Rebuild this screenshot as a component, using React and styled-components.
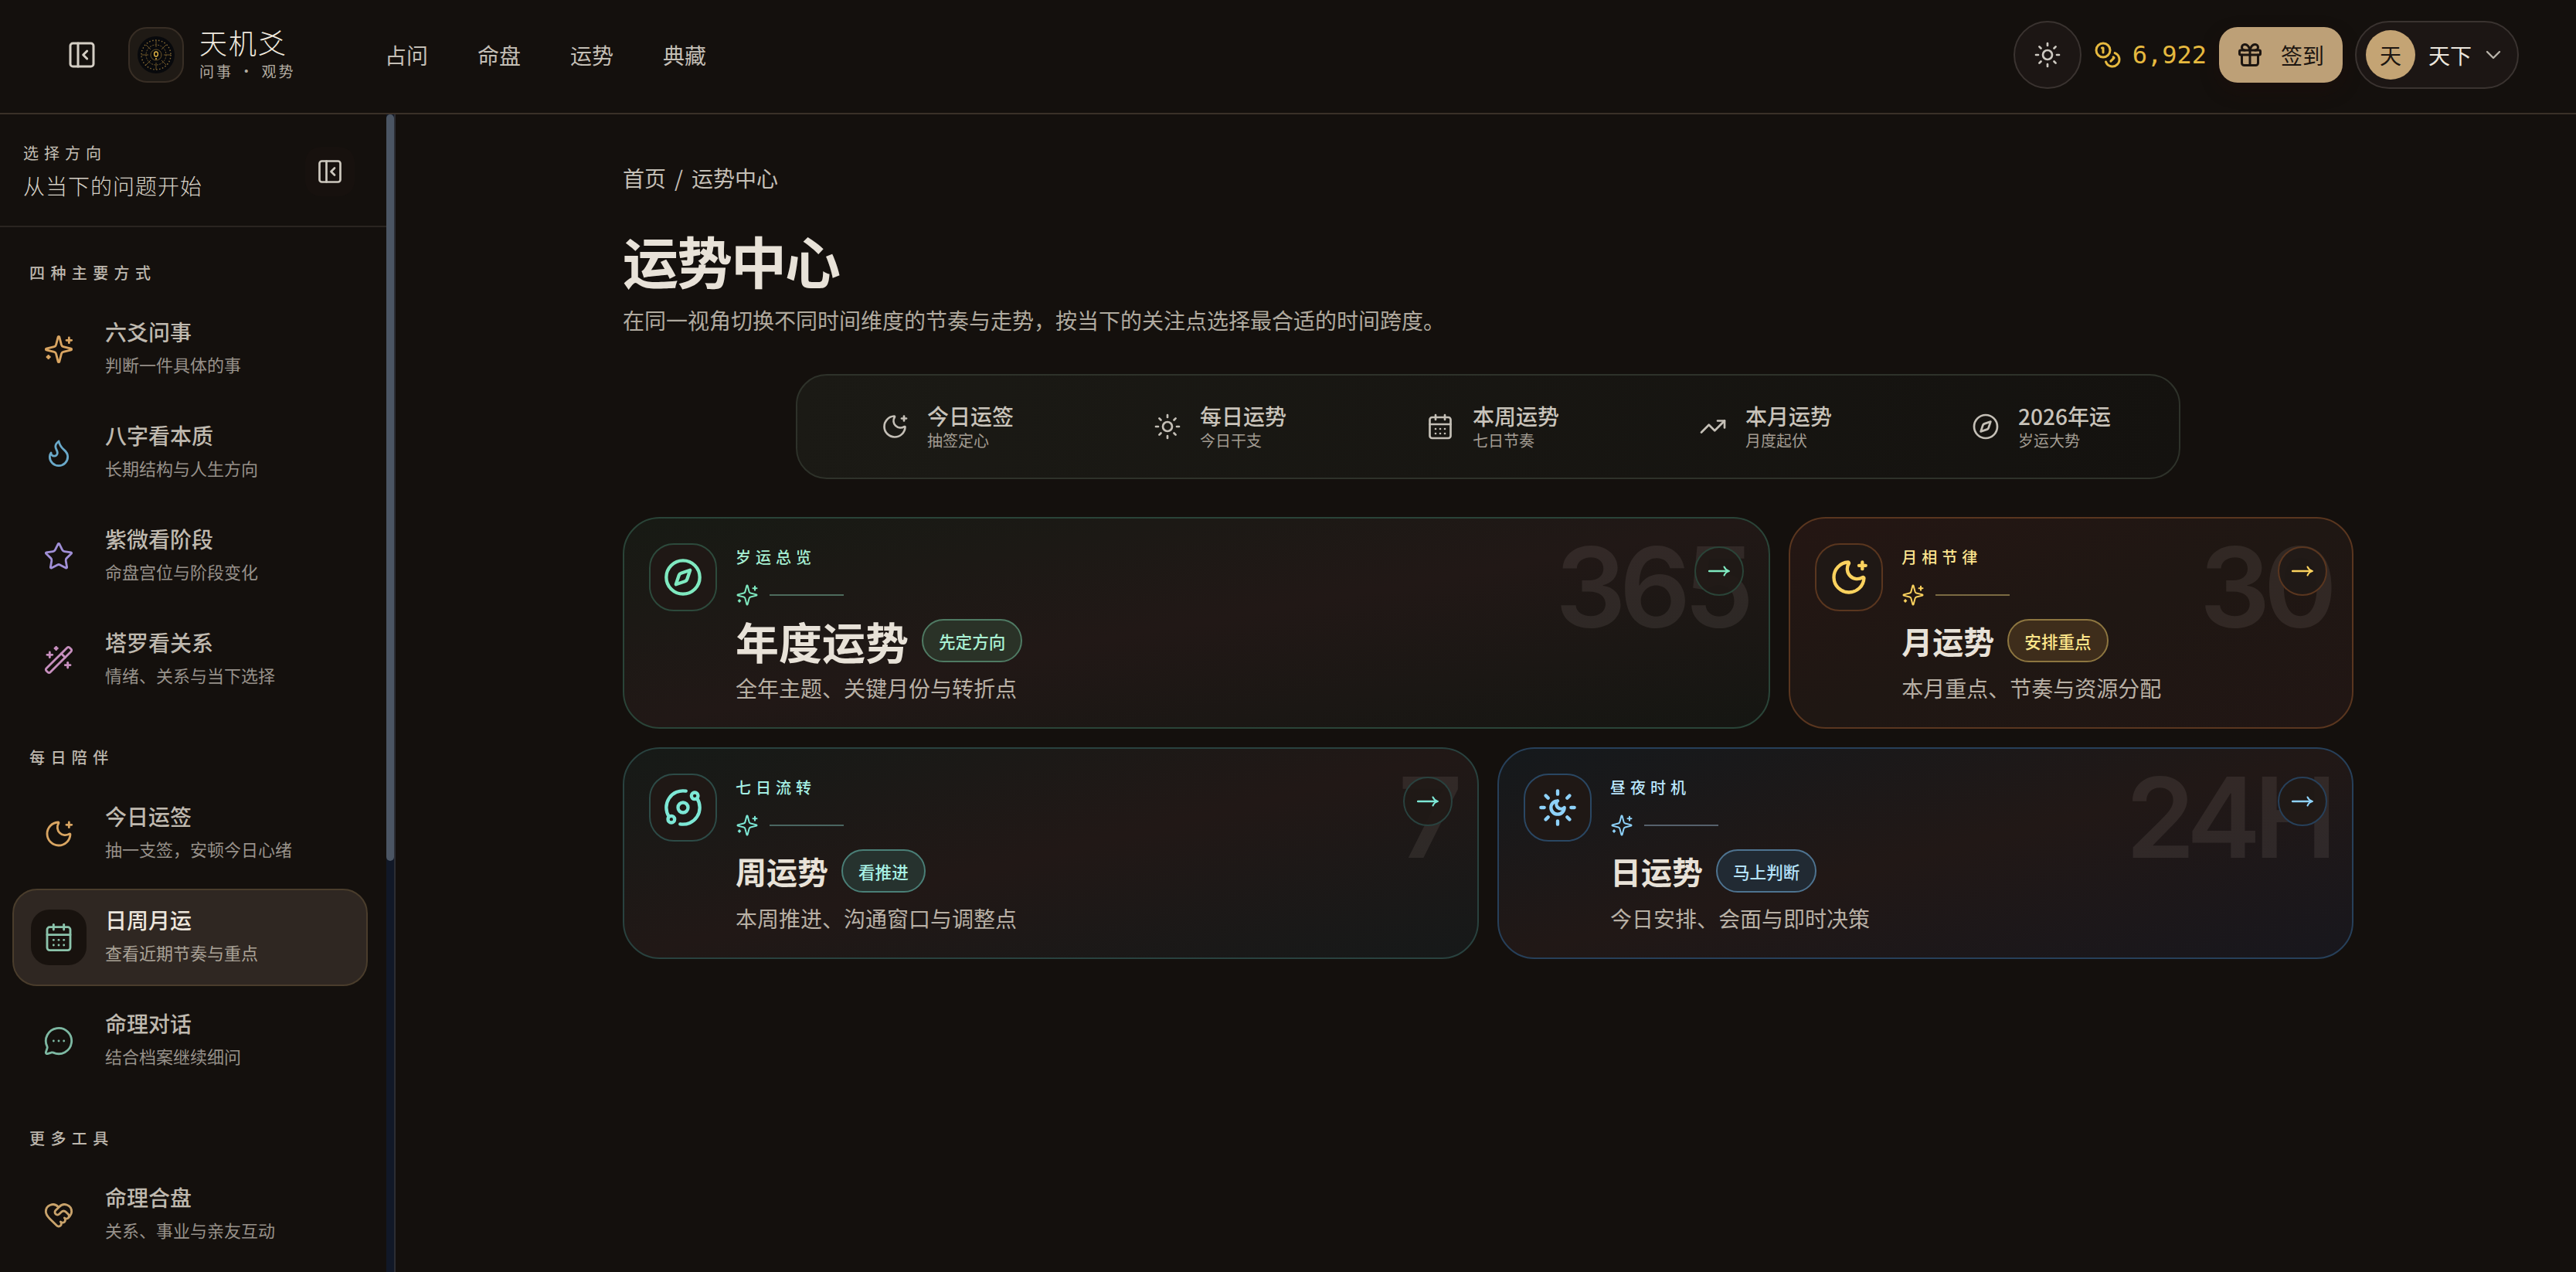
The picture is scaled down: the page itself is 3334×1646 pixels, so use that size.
import React from "react";
import styled, { createGlobalStyle } from "styled-components";
import {
  PanelLeftClose, Sun, Coins, Gift, ChevronDown, Flame, Star, WandSparkles,
  MoonStar, CalendarDays, MessageCircleMore, HeartHandshake, TrendingUp, Compass, Orbit,
} from "lucide-react";

// the narrow four point star from the older lucide set, the installed one is fatter
function SparkMark({ size, strokeWidth }) {
  return (
    <svg width={size} height={size} viewBox="0 0 24 24" fill="none" stroke="currentColor" strokeWidth={strokeWidth} strokeLinecap="round" strokeLinejoin="round">
      <path d="M9.937 15.5A2 2 0 0 0 8.5 14.063l-6.135-1.582a.5.5 0 0 1 0-.962L8.5 9.936A2 2 0 0 0 9.937 8.5l1.582-6.135a.5.5 0 0 1 .963 0L14.063 8.5A2 2 0 0 0 15.5 9.937l6.135 1.581a.5.5 0 0 1 0 .964L15.5 14.063a2 2 0 0 0-1.437 1.437l-1.582 6.135a.5.5 0 0 1-.963 0z" />
      <path d="M20 3v4M22 5h-4M4 17v2M5 18H3" />
    </svg>
  );
}

// lucide 0.562 SunMoon lost its left rays, the reference has the full ring
function SunMoonRing({ size, strokeWidth }) {
  return (
    <svg width={size} height={size} viewBox="0 0 24 24" fill="none" stroke="currentColor" strokeWidth={strokeWidth} strokeLinecap="round" strokeLinejoin="round">
      <path d="M12 8a2.83 2.83 0 0 0 4 4 4 4 0 1 1-4-4" />
      <path d="M12 2v2M12 20v2M4.9 4.9l1.4 1.4M17.7 17.7l1.4 1.4M2 12h2M20 12h2M6.3 17.7l-1.4 1.4M19.1 4.9l-1.4 1.4" />
    </svg>
  );
}

function ThinArrow() {
  return (
    <svg width="28" height="16" viewBox="0 0 28 16" fill="none" stroke="currentColor" strokeWidth="2.4" strokeLinecap="round">
      <path d="M1 8h25" />
      <path d="M20.5 2.5c1.2 2.8 3 4.6 6 5.5-3 .9-4.8 2.7-6 5.5" strokeWidth="2" />
    </svg>
  );
}

const sideSections = [
  {
    label: "四种主要方式",
    items: [
      { icon: SparkMark, color: "#d9a562", title: "六爻问事", sub: "判断一件具体的事" },
      { icon: Flame, color: "#6aa9c9", title: "八字看本质", sub: "长期结构与人生方向" },
      { icon: Star, color: "#a08fd6", title: "紫微看阶段", sub: "命盘宫位与阶段变化" },
      { icon: WandSparkles, color: "#c78fbe", title: "塔罗看关系", sub: "情绪、关系与当下选择" },
    ],
  },
  {
    label: "每日陪伴",
    items: [
      { icon: MoonStar, color: "#d9a562", title: "今日运签", sub: "抽一支签\uFF0C安顿今日心绪" },
      { icon: CalendarDays, color: "#8cc4ac", title: "日周月运", sub: "查看近期节奏与重点", active: true },
      { icon: MessageCircleMore, color: "#7db8a2", title: "命理对话", sub: "结合档案继续细问" },
    ],
  },
  {
    label: "更多工具",
    items: [{ icon: HeartHandshake, color: "#c9a36b", title: "命理合盘", sub: "关系、事业与亲友互动" }],
  },
];

const stripItems = [
  { icon: MoonStar, title: "今日运签", sub: "抽签定心" },
  { icon: Sun, title: "每日运势", sub: "今日干支" },
  { icon: CalendarDays, title: "本周运势", sub: "七日节奏" },
  { icon: TrendingUp, title: "本月运势", sub: "月度起伏" },
  { icon: Compass, title: "2026年运", sub: "岁运大势" },
];

const tones = {
  mint: {
    accent: "#7fe9c0", eyebrow: "#a6efd2", border: "#2a4438", boxBorder: "#2d4a3c", line: "#4d6b5c",
    badgeBg: "#2a3227", badgeBorder: "#4f7a63", badgeText: "#a9f0d2",
    from: "#171a14", mid: "#211816", to: "#151612",
  },
  gold: {
    accent: "#fbd25e", eyebrow: "#fde58f", border: "#5a361f", boxBorder: "#5a361f", line: "#7b6a42",
    badgeBg: "#3e2d1b", badgeBorder: "#8d7640", badgeText: "#fde68a",
    from: "#241613", mid: "#1f1713", to: "#211614",
  },
  teal: {
    accent: "#7de8d6", eyebrow: "#a5f0e4", border: "#29423f", boxBorder: "#2d4b47", line: "#4a6661",
    badgeBg: "#26322e", badgeBorder: "#4a7f77", badgeText: "#a8f2e6",
    from: "#161a17", mid: "#211816", to: "#161919",
  },
  sky: {
    accent: "#8ed2fa", eyebrow: "#bae6fd", border: "#27405a", boxBorder: "#2a4763", line: "#56616c",
    badgeBg: "#212a33", badgeBorder: "#4e7390", badgeText: "#b5e3fb",
    from: "#15191c", mid: "#211816", to: "#18171d",
  },
};

const cards = [
  { span: 8, tone: "mint", icon: Compass, eyebrow: "岁运总览", title: "年度运势", big: true, badge: "先定方向", desc: "全年主题、关键月份与转折点", ghost: "365" },
  { span: 4, tone: "gold", icon: MoonStar, eyebrow: "月相节律", title: "月运势", badge: "安排重点", desc: "本月重点、节奏与资源分配", ghost: "30" },
  { span: 6, tone: "teal", icon: Orbit, eyebrow: "七日流转", title: "周运势", badge: "看推进", desc: "本周推进、沟通窗口与调整点", ghost: "7" },
  { span: 6, tone: "sky", icon: SunMoonRing, eyebrow: "昼夜时机", title: "日运势", badge: "马上判断", desc: "今日安排、会面与即时决策", ghost: "24H" },
];

const pageDesc = "在同一视角切换不同时间维度的节奏与走势\uFF0C按当下的关注点选择最合适的时间跨度。";

function LogoMark() {
  return (
    <svg width="48" height="48" viewBox="0 0 48 48">
      <circle cx="24" cy="24" r="24" fill="#08090c" />
      <circle cx="24" cy="24" r="19" fill="none" stroke="#8a6d35" strokeWidth="1.4" strokeDasharray="1.5 2.5" />
      <circle cx="24" cy="24" r="13" fill="none" stroke="#7a6030" strokeWidth="1" strokeDasharray="2 1.5" />
      <circle cx="24" cy="24" r="7" fill="none" stroke="#6b5429" strokeWidth="1" />
      <path d="M24 5v9M24 34v9M5 24h9M34 24h9M11 11l6 6M31 31l6 6M37 11l-6 6M17 31l-6 6" stroke="#6b5429" strokeWidth="1" />
      <ellipse cx="24" cy="23" rx="2.4" ry="3" fill="none" stroke="#e3b544" strokeWidth="1.4" />
      <circle cx="24" cy="29" r="1" fill="#e3b544" />
    </svg>
  );
}

export default function App() {
  return (
    <>
      <GlobalStyle />
      <Page>
        <TopBar>
          <HeaderToggle><PanelLeftClose size={40} strokeWidth={1.8} /></HeaderToggle>
          <LogoBox><LogoMark /></LogoBox>
          <Brand>
            <BrandName>天机爻</BrandName>
            <BrandSub>问事 · 观势</BrandSub>
          </Brand>
          <TopNav>
            <TopLink>占问</TopLink>
            <TopLink>命盘</TopLink>
            <TopLink>运势</TopLink>
            <TopLink>典藏</TopLink>
          </TopNav>
          <TopActions>
            <ThemeButton><Sun size={36} strokeWidth={1.8} /></ThemeButton>
            <Balance>
              <Coins size={36} strokeWidth={2} />
              <BalanceNum>6,922</BalanceNum>
            </Balance>
            <SignButton><Gift size={36} strokeWidth={2} />签到</SignButton>
            <UserPill>
              <Avatar>天</Avatar>
              <UserName>天下</UserName>
              <ChevronDown size={32} strokeWidth={1.8} />
            </UserPill>
          </TopActions>
        </TopBar>
        <Body>
          <Sidebar>
            <SideInner>
              <SideHead>
                <div>
                  <SideKicker>选择方向</SideKicker>
                  <SideHeadline>从当下的问题开始</SideHeadline>
                </div>
                <SideToggle><PanelLeftClose size={36} strokeWidth={1.8} /></SideToggle>
              </SideHead>
              <SideNav>
                {sideSections.map((section) => (
                  <section key={section.label}>
                    <SectionLabel>{section.label}</SectionLabel>
                    <SectionItems>
                      {section.items.map((item) => (
                        <SideItem key={item.title} $active={item.active}>
                          <SideIcon $active={item.active} $color={item.color}>
                            <item.icon size={40} strokeWidth={1.7} />
                          </SideIcon>
                          <SideText>
                            <SideTitle $active={item.active}>{item.title}</SideTitle>
                            <SideSub $active={item.active}>{item.sub}</SideSub>
                          </SideText>
                        </SideItem>
                      ))}
                    </SectionItems>
                  </section>
                ))}
              </SideNav>
            </SideInner>
            <ScrollTrack><ScrollThumb /></ScrollTrack>
          </Sidebar>
          <Main>
            <Crumbs>首页<CrumbSep>/</CrumbSep>运势中心</Crumbs>
            <PageTitle>运势中心</PageTitle>
            <PageDesc>{pageDesc}</PageDesc>
            <Strip>
              {stripItems.map((item) => (
                <StripItem key={item.title}>
                  <item.icon size={36} strokeWidth={1.8} />
                  <div>
                    <StripTitle>{item.title}</StripTitle>
                    <StripSub>{item.sub}</StripSub>
                  </div>
                </StripItem>
              ))}
            </Strip>
            <CardGrid>
              {cards.map((card) => {
                const tone = tones[card.tone];
                return (
                  <Card key={card.title} $span={card.span} $tone={tone}>
                    <Ghost>{card.ghost}</Ghost>
                    <ArrowButton $tone={tone}><ThinArrow /></ArrowButton>
                    <CardIcon $tone={tone}><card.icon size={52} strokeWidth={2} /></CardIcon>
                    <CardBody>
                      <Eyebrow $tone={tone}>{card.eyebrow}</Eyebrow>
                      <SparkRow $tone={tone}>
                        <SparkMark size={30} strokeWidth={1.6} />
                        <SparkLine $tone={tone} />
                      </SparkRow>
                      <TitleRow>
                        <CardTitle $big={card.big}>{card.title}</CardTitle>
                        <Badge $tone={tone}>{card.badge}</Badge>
                      </TitleRow>
                      <CardDesc>{card.desc}</CardDesc>
                    </CardBody>
                  </Card>
                );
              })}
            </CardGrid>
          </Main>
        </Body>
      </Page>
    </>
  );
}

const GlobalStyle = createGlobalStyle`
  html, body {
    margin: 0;
    height: 100%;
    overflow: hidden;
    background: #14100d;
  }
  * { box-sizing: border-box; }
  body {
    font-family: "Noto Sans CJK SC", "Noto Sans", sans-serif;
    color: #e8e2d8;
  }
`;

const Page = styled.div`
  height: 100vh;
  display: flex;
  flex-direction: column;
`;

const TopBar = styled.header`
  height: 148px;
  flex: none;
  display: flex;
  align-items: center;
  padding: 0 74px 4px 86px;
  border-bottom: 2px solid #3a3028;
`;

const HeaderToggle = styled.div`
  display: flex;
  color: #d4cec4;
  margin-right: 40px;
`;

const LogoBox = styled.div`
  width: 72px;
  height: 72px;
  border-radius: 24px;
  background: #1f1a15;
  border: 2px solid #382e25;
  display: flex;
  align-items: center;
  justify-content: center;
  margin-right: 20px;
`;

const Brand = styled.div`
  width: 240px;
  display: flex;
  flex-direction: column;
  padding-bottom: 4px;
`;

const BrandName = styled.div`
  font-size: 36px;
  line-height: 42px;
  font-weight: 300;
  letter-spacing: 2px;
  color: #efe9df;
`;

const BrandSub = styled.div`
  font-size: 19px;
  line-height: 26px;
  letter-spacing: 3px;
  color: #b3aca1;
  margin-top: 4px;
`;

const TopNav = styled.nav`
  display: flex;
  gap: 64px;
`;

const TopLink = styled.a`
  font-size: 28px;
  line-height: 40px;
  color: #c4bfb6;
`;

const TopActions = styled.div`
  margin-left: auto;
  display: flex;
  align-items: center;
  gap: 16px;
`;

const ThemeButton = styled.div`
  width: 88px;
  height: 88px;
  border-radius: 50%;
  background: #1c1614;
  border: 2px solid #3a3330;
  color: #cdc9c1;
  display: flex;
  align-items: center;
  justify-content: center;
`;

const Balance = styled.div`
  display: flex;
  align-items: center;
  gap: 14px;
  color: #e6b93f;
`;

const BalanceNum = styled.span`
  font-family: "DejaVu Sans Mono", monospace;
  font-size: 32px;
  line-height: 40px;
`;

const SignButton = styled.div`
  width: 160px;
  height: 72px;
  border-radius: 24px;
  background: #bda077;
  color: #1c1510;
  font-size: 28px;
  display: flex;
  align-items: center;
  gap: 22px;
  padding-left: 22px;
  box-shadow: 0 10px 24px rgba(40, 14, 10, 0.3);
`;

const UserPill = styled.div`
  width: 212px;
  height: 88px;
  border-radius: 44px;
  background: #1c1614;
  border: 2px solid #3a3330;
  display: flex;
  align-items: center;
  padding-left: 12px;
  color: #b8b3aa;
`;

const Avatar = styled.div`
  width: 64px;
  height: 64px;
  border-radius: 50%;
  background: #c4a474;
  color: #1c1510;
  font-size: 28px;
  display: flex;
  align-items: center;
  justify-content: center;
  margin-right: 17px;
`;

const UserName = styled.span`
  font-size: 28px;
  color: #ece7de;
  margin-right: 12px;
`;

const Body = styled.div`
  flex: 1;
  min-height: 0;
  display: flex;
`;

const Sidebar = styled.aside`
  width: 512px;
  flex: none;
  position: relative;
  overflow: hidden;
  border-right: 2px solid #2c2d33;
`;

const SideInner = styled.div`
  width: 500px;
`;

const ScrollTrack = styled.div`
  position: absolute;
  top: 0;
  right: 0;
  bottom: 0;
  width: 10px;
  background: #111827;
`;

const ScrollThumb = styled.div`
  height: 966px;
  border-radius: 5px;
  background: #4b5563;
`;

const SideHead = styled.div`
  height: 146px;
  padding: 3px 41px 0 30px;
  display: flex;
  align-items: center;
  justify-content: space-between;
  border-bottom: 2px solid #2a2420;
`;

const SideKicker = styled.div`
  font-size: 20px;
  line-height: 30px;
  letter-spacing: 7px;
  color: #c6c0b6;
`;

const SideHeadline = styled.div`
  font-size: 28px;
  line-height: 40px;
  font-weight: 300;
  letter-spacing: 1px;
  color: #d6d0c6;
  margin-top: 7px;
`;

const SideToggle = styled.div`
  width: 64px;
  height: 64px;
  border-radius: 20px;
  background: #17110e;
  color: #cdc8be;
  display: flex;
  align-items: center;
  justify-content: center;
`;

const SideNav = styled.nav`
  padding: 44px 24px 0 16px;
  display: flex;
  flex-direction: column;
  gap: 48px;
`;

const SectionLabel = styled.div`
  font-size: 20px;
  line-height: 30px;
  letter-spacing: 7.4px;
  font-weight: 500;
  color: #bdb7ad;
  padding-left: 22px;
  margin-bottom: 21px;
`;

const SectionItems = styled.div`
  display: flex;
  flex-direction: column;
  gap: 8px;
`;

const SideItem = styled.div`
  height: 126px;
  display: flex;
  align-items: center;
  gap: 24px;
  padding-left: 22px;
  border-radius: 32px;
  border: 2px solid ${(p) => (p.$active ? "#4a3d2c" : "transparent")};
  background: ${(p) => (p.$active ? "#2f2722" : "transparent")};
`;

const SideIcon = styled.div`
  width: 72px;
  height: 72px;
  flex: none;
  border-radius: 24px;
  color: ${(p) => p.$color};
  background: ${(p) => (p.$active ? "#18120e" : "transparent")};
  display: flex;
  align-items: center;
  justify-content: center;
`;

const SideText = styled.div`
  margin-bottom: 8px;
`;

const SideTitle = styled.div`
  font-size: 28px;
  line-height: 40px;
  font-weight: 500;
  color: ${(p) => (p.$active ? "#ece6dc" : "#bfb9af")};
`;

const SideSub = styled.div`
  font-size: 22px;
  line-height: 32px;
  margin-top: 6px;
  color: ${(p) => (p.$active ? "#aaa398" : "#97918a")};
`;

const Main = styled.main`
  flex: 1;
  min-width: 0;
  padding: 62px 288px 0 294px;
`;

const Crumbs = styled.div`
  font-size: 28px;
  line-height: 40px;
  color: #c4bfb6;
`;

const CrumbSep = styled.span`
  margin: 0 11px;
`;

const PageTitle = styled.h1`
  margin: 42px 0 0;
  font-size: 72px;
  line-height: 88px;
  font-weight: 700;
  letter-spacing: -2px;
  color: #e8e2d8;
`;

const PageDesc = styled.p`
  margin: 14px 0 0;
  font-size: 28px;
  line-height: 40px;
  color: #b0aa9f;
`;

const Strip = styled.div`
  width: 1792px;
  height: 136px;
  margin: 50px auto 0;
  border: 2px solid #2e322a;
  border-radius: 40px;
  background: linear-gradient(100deg, #1b1a15, #14120f);
  display: flex;
  align-items: center;
  gap: 181px;
  padding-left: 108px;
`;

const StripItem = styled.div`
  display: flex;
  align-items: center;
  gap: 24px;
  color: #c4bfb6;
`;

const StripTitle = styled.div`
  font-size: 28px;
  line-height: 36px;
  font-weight: 500;
  white-space: nowrap;
  color: #c8c3ba;
`;

const StripSub = styled.div`
  font-size: 20px;
  line-height: 28px;
  color: #a29c92;
`;

const CardGrid = styled.div`
  margin-top: 49px;
  display: grid;
  grid-template-columns: repeat(12, 1fr);
  gap: 24px;
`;

const Card = styled.article`
  grid-column: span ${(p) => p.$span};
  height: 274px;
  position: relative;
  overflow: hidden;
  border-radius: 48px;
  border: 2px solid ${(p) => p.$tone.border};
  background: linear-gradient(to bottom right, ${(p) => p.$tone.from}, ${(p) => p.$tone.mid} 50%, ${(p) => p.$tone.to});
  padding: 32px;
  display: flex;
  gap: 24px;
`;

const Ghost = styled.div`
  position: absolute;
  top: 17px;
  right: 28px;
  font-family: Inter, "Liberation Sans", sans-serif;
  font-size: 144px;
  line-height: 1;
  font-weight: 600;
  letter-spacing: -0.06em;
  color: rgba(232, 226, 216, 0.09);
`;

const ArrowButton = styled.div`
  position: absolute;
  top: 36px;
  right: 32px;
  width: 64px;
  height: 64px;
  border-radius: 50%;
  background: rgba(32, 25, 22, 0.94);
  border: 2px solid ${(p) => p.$tone.border};
  color: ${(p) => p.$tone.accent};
  display: flex;
  align-items: center;
  justify-content: center;
`;

const CardIcon = styled.div`
  width: 88px;
  height: 88px;
  flex: none;
  border-radius: 32px;
  background: #1f1815;
  border: 2px solid ${(p) => p.$tone.boxBorder};
  color: ${(p) => p.$tone.accent};
  display: flex;
  align-items: center;
  justify-content: center;
`;

const CardBody = styled.div`
  position: relative;
  min-width: 0;
`;

const Eyebrow = styled.div`
  font-size: 20px;
  line-height: 36px;
  font-weight: 500;
  letter-spacing: 6px;
  color: ${(p) => p.$tone.eyebrow};
`;

const SparkRow = styled.div`
  display: flex;
  align-items: center;
  gap: 14px;
  height: 28px;
  margin: 17px 0;
  color: ${(p) => p.$tone.accent};
`;

const SparkLine = styled.div`
  width: 96px;
  height: 2px;
  background: ${(p) => p.$tone.line};
`;

const TitleRow = styled.div`
  display: flex;
  align-items: center;
  gap: 17px;
  height: 56px;
`;

const CardTitle = styled.h2`
  margin: 0;
  font-size: ${(p) => (p.$big ? "56px" : "40px")};
  line-height: 56px;
  font-weight: 700;
  color: #e8e2d8;
`;

const Badge = styled.span`
  height: 56px;
  padding: 0 20px;
  border-radius: 28px;
  border: 2px solid ${(p) => p.$tone.badgeBorder};
  background: ${(p) => p.$tone.badgeBg};
  color: ${(p) => p.$tone.badgeText};
  font-size: 21.6px;
  font-weight: 500;
  display: flex;
  align-items: center;
`;

const CardDesc = styled.p`
  margin: 14px 0 0;
  font-size: 28px;
  line-height: 38px;
  color: #b8b0a5;
`;
